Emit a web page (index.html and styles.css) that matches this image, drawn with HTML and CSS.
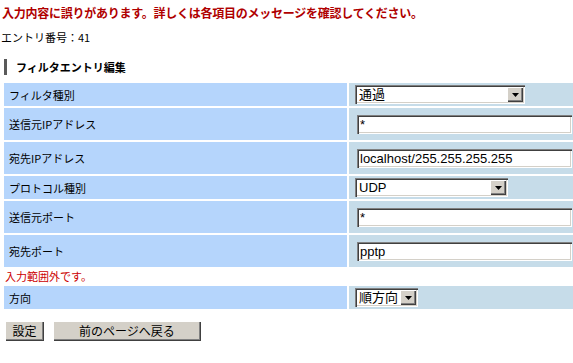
FILE: index.html
```html
<!DOCTYPE html>
<html lang="ja">
<head>
<meta charset="utf-8">
<title>フィルタエントリ編集</title>
<link rel="stylesheet" href="styles.css">
</head>
<body>
<h1 class="error-title">入力内容に誤りがあります。詳しくは各項目のメッセージを確認してください。</h1>
<p class="entry-no">エントリ番号：41</p>
<h2 class="section-title">フィルタエントリ編集</h2>
<form class="form-grid">
  <div class="label h-s">フィルタ種別</div>
  <div class="value h-s">
    <span class="select w-type"><select><option>通過</option></select><span class="select-btn"><svg width="7" height="4" viewBox="0 0 7 4"><path d="M0 0H7L3.5 4Z" fill="#000"/></svg></span></span>
  </div>

  <div class="label h-i">送信元IPアドレス</div>
  <div class="value h-i"><input class="text-input" type="text" value="*"></div>

  <div class="label h-i">宛先IPアドレス</div>
  <div class="value h-i"><input class="text-input" type="text" value="localhost/255.255.255.255"></div>

  <div class="label h-s">プロトコル種別</div>
  <div class="value h-s">
    <span class="select w-proto"><select><option>UDP</option></select><span class="select-btn"><svg width="7" height="4" viewBox="0 0 7 4"><path d="M0 0H7L3.5 4Z" fill="#000"/></svg></span></span>
  </div>

  <div class="label h-i">送信元ポート</div>
  <div class="value h-i"><input class="text-input" type="text" value="*"></div>

  <div class="label h-i">宛先ポート</div>
  <div class="value h-i"><input class="text-input" type="text" value="pptp"></div>

  <div class="field-error">入力範囲外です。</div>

  <div class="label h-s">方向</div>
  <div class="value h-s">
    <span class="select w-dir"><select><option>順方向</option></select><span class="select-btn"><svg width="7" height="4" viewBox="0 0 7 4"><path d="M0 0H7L3.5 4Z" fill="#000"/></svg></span></span>
  </div>
</form>
<div class="actions">
  <button class="btn btn-set" type="button">設定</button>
  <button class="btn btn-back" type="button">前のページへ戻る</button>
</div>
</body>
</html>
```
FILE: styles.css
```css
html, body {
  background: #fff;
}
body {
  margin: 0;
  padding: 0 0 0 4px;
  font-family: "Noto Sans CJK JP", sans-serif;
  font-size: 11px;
  color: #000;
  overflow: hidden;
}
.error-title {
  margin: 5px 0 0 -2px;
  font-size: 12px;
  line-height: 16px;
  font-weight: bold;
  color: #b00000;
  letter-spacing: -0.25px;
}
.entry-no {
  margin: 9px 0 0 -3px;
  font-size: 11px;
  line-height: 14px;
}
.section-title {
  margin: 15px 0 0;
  height: 16px;
  display: flex;
  align-items: center;
  gap: 9px;
  font-size: 11px;
  font-weight: bold;
}
.section-title::before {
  content: "";
  width: 3px;
  height: 16px;
  background: #5a5a5a;
}
.form-grid {
  margin: 8px 0 0;
  display: grid;
  grid-template-columns: 343px 1fr;
  gap: 2px;
}
.label {
  background: #b5d5fc;
  padding-left: 5px;
  display: flex;
  align-items: center;
}
.value {
  background: #c6dce9;
  display: flex;
  align-items: center;
}
.h-s { height: 23px; }
.h-i { height: 32px; }
.field-error {
  grid-column: 1 / -1;
  color: #cc0000;
  line-height: 15px;
  padding-left: 1px;
}
.text-input {
  margin: 0 0 0 8px;
  width: 215px;
  height: 19px;
  box-sizing: border-box;
  border: 0;
  padding: 0 3px;
  background: #fff;
  font-family: "Liberation Sans", "Noto Sans CJK JP", sans-serif;
  font-size: 13px;
  color: #000;
  box-shadow: inset 1px 1px #808080, inset 2px 2px #404040, inset -1px -1px #fff, inset -2px -2px #d4d0c8;
  outline: none;
}
.select {
  margin-left: 6px;
  display: inline-flex;
  align-items: center;
  height: 19px;
  box-sizing: border-box;
  padding: 2px;
  background: #fff;
  box-shadow: inset 1px 1px #808080, inset 2px 2px #404040, inset -1px -1px #fff, inset -2px -2px #d4d0c8;
}
.select select {
  appearance: none;
  -webkit-appearance: none;
  flex: 1;
  min-width: 0;
  height: 15px;
  border: 0;
  padding: 0 2px;
  margin: 0;
  background: transparent;
  font-family: "Liberation Sans", "Noto Sans CJK JP", sans-serif;
  font-size: 13px;
  line-height: 15px;
  color: #000;
  outline: none;
}
.select-btn {
  width: 16px;
  height: 15px;
  flex: none;
  background: #d4d0c8;
  display: flex;
  align-items: center;
  justify-content: center;
  box-shadow: inset 1px 1px #fff, inset -1px -1px #404040, inset -2px -2px #808080;
}
.w-type { width: 170px; }
.w-proto { width: 153px; }
.w-dir { width: 63px; }
.actions {
  margin: 12px 0 0 1px;
  display: flex;
  gap: 9px;
}
.btn {
  height: 20px;
  border: 0;
  padding: 0;
  background: #d4d0c8;
  font-family: "Noto Sans CJK JP", sans-serif;
  font-size: 12px;
  line-height: 20px;
  color: #000;
  box-shadow: inset 1px 1px #fff, inset -1px -1px #404040, inset -2px -2px #808080;
}
.btn-set { width: 39px; }
.btn-back { width: 148px; }
```
